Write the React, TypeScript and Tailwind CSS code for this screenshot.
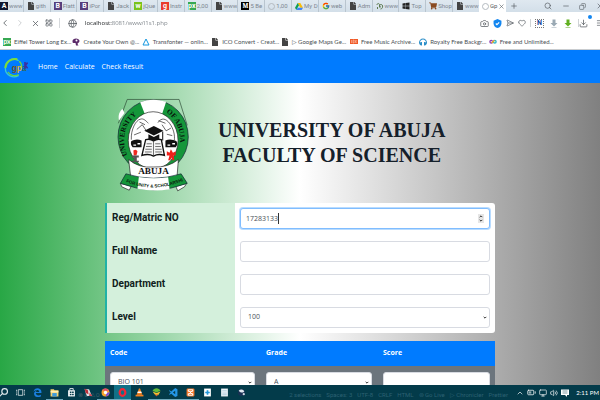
import type { ReactNode } from "react";
import {
  BatteryMedium, Camera, ChevronLeft, ChevronRight, ChevronUp, Copy, Download, Globe, Heart,
  LayoutGrid, Menu, Minus, Monitor, Plus, Search, SendHorizontal, Volume2, X,
} from "lucide-react";
import { FcGoogle } from "react-icons/fc";
import { FaFile, FaWindows, FaShoppingCart, FaHeadphones } from "react-icons/fa";

const Page = () => <FaFile size={8} className="shrink-0 text-[#444]" />;
const Block = ({ children, tone }: { children: ReactNode; tone: string }) => (
  <span className={`flex size-2 shrink-0 items-center justify-center text-[7px] leading-none font-bold text-white ${tone}`}>
    {children}
  </span>
);
const Ring = () => <span className="size-[7px] shrink-0 rounded-full border border-[#b4bac0]" />;
const Drive = () => (
  <svg viewBox="0 0 24 21" className="w-2 shrink-0">
    <path d="M8 0h8l8 14h-8z" fill="#fbbc05" />
    <path d="M8 0l4 7-8 14-4-7z" fill="#0f9d58" />
    <path d="M8 14h16l-4 7H4z" fill="#4285f4" />
  </svg>
);
const Sprout = () => (
  <svg viewBox="0 0 16 16" className="size-2 shrink-0" fill="none" stroke="#5c7a4e" strokeWidth="2">
    <path d="M2 6c0-4 5-4 5 0v5M9 14c5 0 6-9 1-9-4 0-3 5 0 5M3 10v4" />
  </svg>
);

const tabs: { icon: ReactNode; label: string }[] = [
  { icon: <Block tone="bg-[#10172f]">A</Block>, label: "www" },
  { icon: <Page />, label: "gith" },
  { icon: <Block tone="bg-[#563d7c]">B</Block>, label: "Flatt" },
  { icon: <Block tone="bg-[#563d7c]">B</Block>, label: "iPor" },
  { icon: <Page />, label: "Jack" },
  { icon: <Block tone="bg-[#7ac31b]">w</Block>, label: "jQue" },
  { icon: <Block tone="bg-[#e93b2c]">g</Block>, label: "Instr" },
  { icon: <Block tone="bg-[#36a852]">px</Block>, label: "2,00" },
  { icon: <Page />, label: "www" },
  { icon: <Block tone="bg-black font-serif">M</Block>, label: "5 Be" },
  { icon: <Ring />, label: "1,00" },
  { icon: <Drive />, label: "My D" },
  { icon: <FcGoogle size={8} className="shrink-0" />, label: "web" },
  { icon: <Page />, label: "Adm" },
  { icon: <Sprout />, label: "www" },
  { icon: <FaWindows size={8} className="shrink-0 text-[#222]" />, label: "Top" },
  { icon: <FaShoppingCart size={8} className="shrink-0 text-[#8a4b22]" />, label: "Shop" },
  { icon: <Page />, label: "www" },
];

const bookmarks: { icon: ReactNode; label: string }[] = [
  { icon: <Block tone="bg-[#36a852]">px</Block>, label: "Eiffel Tower Long Ex..." },
  {
    icon: (
      <svg viewBox="0 0 16 16" className="size-2 shrink-0" fill="#5b2a68">
        <path d="M1 6c0-7 14-7 14 0 0 4-4 3-4 6l2 3H8l-1-5H3C1 10 1 8 1 6z" />
        <circle cx="9" cy="5" r="2" fill="#fff" />
      </svg>
    ),
    label: "Create Your Own @...",
  },
  {
    icon: (
      <svg viewBox="0 0 16 16" className="size-2 shrink-0" fill="none" stroke="#1397e0" strokeWidth="2">
        <path d="M8 2l6 12H2z" />
      </svg>
    ),
    label: "Transfonter — onlin...",
  },
  { icon: <Page />, label: "ICO Convert - Creat..." },
  { icon: <Page />, label: "▷ Google Maps Ge..." },
  {
    icon: (
      <svg viewBox="0 0 16 10" className="w-2 shrink-0">
        <path d="M0 0h16v10H0z" fill="#f05a28" />
        <path d="M3 2v6M6 2v6h2V2zM10 2l3 6M13 2l-3 6" stroke="#ffd9c8" fill="none" />
      </svg>
    ),
    label: "Free Music Archive...",
  },
  { icon: <FaHeadphones size={8} className="shrink-0 text-[#2c8fc9]" />, label: "Royalty Free Backgr..." },
  {
    icon: (
      <svg viewBox="0 0 18 12" className="w-2 shrink-0" fill="none" strokeWidth="3">
        <circle cx="5" cy="6" r="3" stroke="#8e3fb5" />
        <circle cx="13" cy="6" r="3" stroke="#2fb5c9" />
        <path d="M6 9l6-6" stroke="#f2b01e" />
      </svg>
    ),
    label: "Free and Unlimited...",
  },
];

function FatArrow({ color }: { color: string }) {
  return (
    <svg viewBox="0 0 16 18" className="h-[9px] w-2" fill={color}>
      <path d="M5 1h6v7h4l-7 7-7-7h4zM3 16h10v1H3z" />
    </svg>
  );
}

function Browser() {
  return (
    <header className="shrink-0 border-b border-[#c9cccf] bg-white text-[#555b60]">
      <div className="flex h-3 overflow-hidden bg-linear-to-b from-[#dfe8f0] to-[#d3dfe9] font-[Roboto,sans-serif] text-[6px] leading-3">
        <div className="-ml-1 flex min-w-0 flex-1">
          {tabs.map((t, i) => (
            <button key={i} className="flex min-w-0 flex-1 basis-0 items-center gap-px border-l border-[#b9c5cf] pl-[3px] whitespace-nowrap text-[#7d8790]">
              {t.icon}
              <span>{t.label}</span>
            </button>
          ))}
        </div>
        <button className="flex w-[27px] items-center gap-px bg-white pl-[3px]">
          <Ring />
          <span>Gp</span>
          <X size={7} />
        </button>
        <div className="flex w-[94px] items-center justify-between pl-1">
          <button aria-label="New tab" className="mr-4"><Plus size={8} /></button>
          <button aria-label="Search tabs"><Search size={8} /></button>
          <button aria-label="Minimize"><Minus size={8} /></button>
          <button aria-label="Restore"><Copy size={7} className="-scale-x-100" /></button>
          <button aria-label="Close" className="-mr-1"><X size={8} /></button>
        </div>
      </div>
      <div className="flex h-[22px] items-center">
        <div className="flex w-15 items-center justify-between border-r border-[#d6d9dc] pr-[6px]">
          <button aria-label="Back"><ChevronLeft size={10} /></button>
          <button aria-label="Forward" className="text-[#c3c7ca]"><ChevronRight size={10} /></button>
          <button aria-label="Stop"><X size={9} /></button>
          <button aria-label="Speed dial"><LayoutGrid size={8} /></button>
        </div>
        <Globe size={9} className="mx-2" />
        <input
          aria-label="Address"
          defaultValue="localhost:8081/www/l1s1.php"
          className="min-w-0 flex-1 bg-linear-to-r from-[#16191c] from-[27px] to-[#7a8086] to-[27px] bg-clip-text font-['Open_Sans',sans-serif] text-[6px] text-transparent outline-none"
        />
        <div className="flex items-center gap-1">
          <Camera size={9} />
          <svg viewBox="0 0 16 16" className="size-[9px]"><path d="M8 0l7 3v5c0 4-3 7-7 8-4-1-7-4-7-8V3z" fill="#1386f0" /><path d="M5 8l2 2 4-4" stroke="#fff" strokeWidth="2" fill="none" /></svg>
          <SendHorizontal size={8} />
          <Heart size={8} />
          <span className="h-2 w-px bg-[#cfd3d6]" />
        </div>
        <div className="flex items-center gap-[6px] pl-1">
          <span className="flex size-[9px] items-center justify-center border border-dotted border-[#777] font-[Roboto,sans-serif] text-[7px] leading-none font-bold text-[#15449a]">N</span>
          <FatArrow color="#9aa9b4" />
          <FatArrow color="#61b020" />
          <span className="h-2 w-px bg-[#cfd3d6]" />
        </div>
        <div className="relative">
          <Download size={9} />
          <span className="absolute -top-1 -right-1 size-1 rounded-full bg-[#1386f0]" />
        </div>
        <Menu size={8} className="-mr-1 ml-2" />
      </div>
      <nav className="grid h-[15px] w-[93%] grid-cols-8 pl-[3px]">
        {bookmarks.map((b) => (
          <a key={b.label} href="#" className="flex items-center gap-[3px] text-[6px] leading-[14px] whitespace-nowrap text-[#4a4f54]">
            {b.icon}
            {b.label}
          </a>
        ))}
      </nav>
    </header>
  );
}

function SiteNav() {
  return (
    <nav className="flex h-[33px] shrink-0 items-center gap-[7px] bg-[#007bff] pt-[2px] pl-1 font-['Open_Sans',sans-serif] text-[7px] text-white">
      <a href="#" aria-label="gpak" className="mr-[3px]">
        <svg viewBox="0 0 72 60" className="h-5 w-6">
          <path d="M44 8C28-4 4 8 4 31c0 22 24 32 40 21" fill="none" stroke="#38c9d4" strokeWidth="4" />
          <path d="M40 4C20 0 5 13 4 30" fill="none" stroke="#7ddc3a" strokeWidth="6" />
          <path d="M46 10c6 6 8 12 6 20M12 42c6 10 20 14 32 8" fill="none" stroke="#6fd63f" strokeWidth="4" />
          <text x="23" y="38" fontSize="25" fontWeight="bold" fontFamily="Liberation Sans, sans-serif">
            <tspan fill="#7a5520">g</tspan><tspan fill="#e0b02b">p</tspan><tspan fill="#2b6b58">a</tspan>
          </text>
          <path d="M63 12v20M71 14l-7 8 7 9" stroke="#3b2fa0" strokeWidth="5" fill="none" />
        </svg>
      </a>
      <a href="#">Home</a>
      <a href="#">Calculate</a>
      <a href="#">Check Result</a>
    </nav>
  );
}

function Crest() {
  return (
    <svg viewBox="58 26 214 278" className="h-[95px] w-[73px] shrink-0" role="img" aria-label="University of Abuja crest" fontFamily="Liberation Serif, serif" fontWeight="bold">
      <path d="M62 100L88 30h152l24 76" fill="none" stroke="#2c4a35" strokeWidth="2" />
      <path d="M64 92c-4-16 2-28 10-34l6 12z" fill="#fff" />
      <ellipse cx="164" cy="140" rx="103" ry="108" fill="#15963a" stroke="#123" strokeWidth="2" />
      <path d="M126 38q37-14 76-1l-14 42h-46z" fill="#fff" />
      <ellipse cx="164" cy="150" rx="73" ry="84" fill="#fff" stroke="#222" strokeWidth="2" />
      <defs>
        <path id="arc-left" d="M88 194C64 130 90 82 142 60" />
        <path id="arc-right" d="M202 68C240 90 250 140 238 200" />
        <path id="motto" d="M84 272q82 34 170 -4" />
      </defs>
      <text fontSize="21" fill="#06120a"><textPath href="#arc-left">UNIVERSITY</textPath></text>
      <text fontSize="21" fill="#06120a"><textPath href="#arc-right">OF ABUJA</textPath></text>
      <path d="M100 148c-2-30 14-58 26-60 10-4 18 6 24 12M178 98c10-16 24-12 34 2 12 16 16 34 14 50M116 118l16-14 12 18M190 104l12 18 14-8M108 134l20-8M204 132l16 4M180 92l20 8M124 96l16 8" fill="none" stroke="#222" strokeWidth="2" />
      <path d="M100 152q14-8 30-2v20h-26q-8-8-4-18zM200 150q16-6 32 2 6 10-2 18h-30z" fill="#111" />
      <path d="M106 164h8M118 160h8M206 164h8M220 160h8" stroke="#fff" strokeWidth="4" />
      <path d="M142 148q14-4 23 4 10-8 23-4l9 46q-18-6-32 2-14-8-34-2z" fill="#f7f7f7" stroke="#111" strokeWidth="4" />
      <path d="M165 154v40M145 160h15M143 168h17M141 176h19M140 184h20M170 160h15M170 168h17M170 176h19M170 184h20" stroke="#333" strokeWidth="2" />
      <path d="M150 132v14q16 8 32 0v-14l-16 8z" fill="#111" />
      <path d="M138 122l28-14 28 14-28 14z" fill="#111" />
      <path d="M192 124v26" stroke="#111" strokeWidth="3" />
      <path d="M106 180q8-6 12 2l-3 12h-8z" fill="#ef2b20" />
      <path d="M102 194h20v6h-6v10h6v4h-20v-4h6v-10h-6z" fill="#555" />
      <path d="M204 182l8 4 4-10 6 10 8-4v12h-6l2 14h-6l-2-8-4 8h-6l4-14h-8z" fill="#ef1f19" />
      <path d="M92 206q30 26 74 22 42 2 72-22l-4 50q-66 16-136 0z" fill="#fff" stroke="#222" strokeWidth="2" />
      <text x="165" y="250" fontSize="27" textAnchor="middle" fill="#111">ABUJA</text>
      <path d="M68 276l4 10 22 10 6-12zM262 276l-6 10-20 12-6-14z" fill="#fff" stroke="#222" strokeWidth="2" />
      <path d="M84 248q80 26 162 0l18 28q-98 38-196 0z" fill="#15963a" stroke="#123" strokeWidth="2" />
      <path d="M122 257q42 8 86 1l4 35q-46 8-94-1z" fill="#fff" />
      <text fontSize="13" fill="#0a1a0e" fontFamily="Liberation Sans, sans-serif"><textPath href="#motto">FOR UNITY &amp; SCHOLARSHIP</textPath></text>
    </svg>
  );
}

const labelClass = "w-[33%] pl-[5px] pb-[2px] font-[Roboto,sans-serif] text-[10px] leading-[17px] font-bold text-[#101d20]";
const fieldClass = "block h-[21px] w-full rounded-[3px] border bg-white px-[5px] font-['Open_Sans',sans-serif] text-[7px] text-[#495057] outline-none";

function Field({ id, label, children }: { id: string; label: string; children: ReactNode }) {
  return (
    <div className="flex items-center">
      <label htmlFor={id} className={labelClass}>{label}</label>
      <div className="relative flex-1 px-[5px]">{children}</div>
    </div>
  );
}

function Chevron({ flip = false }: { flip?: boolean }) {
  return (
    <svg viewBox="0 0 6 4" className={flip ? "h-[3px] w-1 rotate-180" : "h-[3px] w-1"} fill="none" stroke="#333" strokeWidth="1.5">
      <path d="M1 1l2 2 2-2" />
    </svg>
  );
}

function PickList({ id, value, label }: { id: string; value: string; label?: string }) {
  return (
    <div className="relative">
      <select id={id} aria-label={label} className={`${fieldClass} appearance-none border-[#d8dbe2] pl-[7px]`} defaultValue={value}>
        <option>{value}</option>
      </select>
      <span className="pointer-events-none absolute top-[9px] right-[3px]"><Chevron /></span>
    </div>
  );
}

function StudentForm() {
  return (
    <form className="flex flex-col gap-3 rounded-r-[3px] border-l-2 border-[#20b2a6] bg-[linear-gradient(to_right,#d4f0dc_33%,#fff_33%)] py-[5px]">
      <Field id="reg" label="Reg/Matric NO">
        <input id="reg" type="number" defaultValue="17283133" className={`${fieldClass} border-[#80bdff] ring-1 ring-[#b9dcff] [appearance:textfield]`} />
        <span className="absolute top-[5px] left-[43px] h-[11px] w-px bg-[#333]" />
        <span className="absolute top-[6px] right-[11px] flex h-[9px] w-[6px] flex-col items-center justify-between bg-[#e6e6e6] py-px">
          <Chevron flip />
          <Chevron />
        </span>
      </Field>
      <Field id="name" label="Full Name"><input id="name" type="text" className={`${fieldClass} border-[#d8dbe2]`} /></Field>
      <Field id="dept" label="Department"><input id="dept" type="text" className={`${fieldClass} border-[#d8dbe2]`} /></Field>
      <Field id="level" label="Level"><PickList id="level" value="100" /></Field>
    </form>
  );
}

function Courses() {
  return (
    <table className="mt-2 w-full table-fixed bg-[#6c757d] text-left">
      <thead className="bg-[#007bff] font-['Open_Sans',sans-serif] text-[7px] text-white">
        <tr className="h-[25px]">
          <th className="w-2/5 px-[5px] font-bold">Code</th>
          <th className="w-3/10 px-[5px] font-bold">Grade</th>
          <th className="w-3/10 px-[5px] font-bold">Score</th>
        </tr>
      </thead>
      <tbody>
        <tr>
          <td className="py-[6px] pr-[6px] pl-[5px]"><PickList id="code" label="Code" value="BIO 101" /></td>
          <td className="py-[6px] pr-[6px] pl-[5px]"><PickList id="grade" label="Grade" value="A" /></td>
          <td className="px-[5px] py-[6px]"><input aria-label="Score" className={`${fieldClass} border-[#d8dbe2]`} /></td>
        </tr>
      </tbody>
    </table>
  );
}

const apps: { name: string; open?: boolean; art: ReactNode }[] = [
  { name: "Search", art: <g fill="none" stroke="#e8f0f2" strokeWidth="2"><circle cx="10" cy="6" r="5" /><path d="M6 10l-5 5" /></g> },
  { name: "Task view", art: <path d="M4 3h8v10H4zM2 4H0v8h2M14 4h2v8h-2" fill="none" stroke="#d5e0e3" strokeWidth="1.5" /> },
  { name: "Edge", art: <path d="M1 7C2-2 15-1 15 7v2H5c0 5 6 5 9 3v3C8 18 1 15 2 9c1-3 3-4 5-4-2 1-2 2-2 2h6c0-5-7-4-10 0z" fill="#1b7fe0" /> },
  { name: "Files", open: true, art: <><path d="M1 2h6l1 2h7v11H1z" fill="#f4d270" /><path d="M4 9h8v6H4z" fill="#3b9bdc" /><path d="M1 5h14v3H1z" fill="#fff0b5" /></> },
  { name: "Store", art: <><path d="M5 4V1h6v3" fill="none" stroke="#fff" strokeWidth="1.5" /><path d="M2 4h12v11H2z" fill="#fff" /><path d="M5 6h3v3H5zM9 6h3v3H9zM5 10h3v3H5zM9 10h3v3H9z" fill="#053c4a" /></> },
  { name: "Tools", art: <><path d="M1 2h8l5 12H5z" fill="#dfe3e6" /><path d="M1 1l6 3 1 7-5-2z" fill="#b9303a" /><path d="M10 8l5 6H9z" fill="#cf4550" /></> },
  { name: "Browser", open: true, art: <><circle cx="8" cy="8" r="7" fill="#f6a52b" /><path d="M2 4a7 7 0 0112 1H8z" fill="#e04874" /><path d="M8 15a7 7 0 007-8L10 9z" fill="#7c4ddb" /><circle cx="8" cy="8" r="3" fill="#fff" /></> },
  { name: "Opera", open: true, art: <ellipse cx="8" cy="8" rx="5" ry="6" fill="none" stroke="#f32635" strokeWidth="4" /> },
  { name: "VLC", art: <><path d="M7 1h2l4 11H3z" fill="#f58220" /><path d="M5 6h6l1 3H4z" fill="#fff" /><path d="M1 12h14v3H1z" fill="#f58220" /></> },
  { name: "Emulator", open: true, art: <><path d="M1 5c2-6 12-6 14 0l-7 3z" fill="#62ba3b" /><path d="M1 6l7 3 7-3-4 7H6z" fill="#f1c531" /><path d="M5 10l3 2 3-2-3 5z" fill="#e0502d" /></> },
  { name: "Code", open: true, art: <path d="M11 0l4 2v12l-4 2-7-6-3 2-1-1 3-3-3-3 1-1 3 2zM11 5L7 8l4 3z" fill="#2496e8" fillRule="evenodd" /> },
  { name: "XAMPP", open: true, art: <><rect x="1" y="1" width="14" height="14" rx="2" fill="#f5782a" /><path d="M4 4l8 8M12 4l-8 8M4 3h8v3H4zM4 10h8v3H4z" fill="none" stroke="#fff" strokeWidth="1.5" /></> },
  { name: "Add", art: <><path d="M2 1h12v14H2z" fill="#fff" /><path d="M8 4v8M4 8h8" stroke="#2196d8" strokeWidth="3" /></> },
  { name: "Notes", art: <><path d="M2 1h12v14H2z" fill="#eef5fa" /><path d="M4 5h8M4 9h8M4 12h8" stroke="#7faac5" /></> },
  { name: "Eclipse", art: <><circle cx="8" cy="8" r="6" fill="#1b3154" /><path d="M3 5a6 6 0 0110 1c-3 3-7 3-10-1z" fill="#dfe7ef" /><circle cx="12" cy="11" r="2" fill="#cfd9e4" /></> },
];

const status = ["2 selections", "Spaces: 3", "UTF-8", "CRLF", "HTML", "⊚ Go Live", "▷ Chronicler", "Prettier"];

function Taskbar() {
  return (
    <footer className="relative flex h-[15px] shrink-0 overflow-hidden bg-[#033b4a] text-white">
      <span className="absolute bottom-0 left-[78px] text-[6px] leading-[10px] whitespace-nowrap text-[#41606a]">⊗ 0 ⚠ 0</span>
      <div className="-ml-[5px] flex">
        {apps.map((a) => (
          <button
            key={a.name}
            aria-label={a.name}
            className={`flex w-[17px] items-center justify-center border-b ${a.open ? "border-[#6fa9bd]" : "border-transparent"} ${a.name === "Opera" ? "bg-[#127087]" : ""}`}
          >
            <svg viewBox="0 0 16 16" className="relative size-[9px]">{a.art}</svg>
          </button>
        ))}
      </div>
      <div className="flex flex-1 items-end justify-end gap-[5px] pr-2 font-[Roboto,sans-serif] text-[6px] leading-[10px] whitespace-nowrap text-[#2c6172]">
        {status.map((s) => <span key={s}>{s}</span>)}
      </div>
      <div className="flex items-center gap-[3px]">
        <ChevronUp size={8} />
        <BatteryMedium size={9} />
        <Monitor size={8} />
        <Volume2 size={8} />
        <svg viewBox="0 0 16 16" className="size-2"><path d="M0 1h16v11h-4v4l-4-4H0z" fill="#fff" /><path d="M3 4h10M3 8h10" stroke="#033b4a" /></svg>
        <time className="w-7 pr-px text-right text-[6px] whitespace-nowrap">2:11 PM</time>
      </div>
    </footer>
  );
}

export default function App() {
  return (
    <div className="flex h-screen flex-col overflow-hidden font-[Lato,'Noto_Sans',sans-serif]">
      <Browser />
      <SiteNav />
      <main className="min-h-0 flex-1 overflow-hidden bg-[linear-gradient(to_right,#28a745,#fff,#808080)]">
        <div className="mx-auto w-[65%] pt-[15px]">
          <div className="flex h-[105px] pl-3">
            <Crest />
            <h1 className="pt-[20px] pl-[28px] text-center font-['Liberation_Serif',serif] text-[20px] leading-[25px] font-bold whitespace-nowrap text-[#15202a]">
              UNIVERSITY OF ABUJA
              <br />
              FACULTY OF SCIENCE
            </h1>
          </div>
          <StudentForm />
          <Courses />
        </div>
      </main>
      <Taskbar />
    </div>
  );
}
